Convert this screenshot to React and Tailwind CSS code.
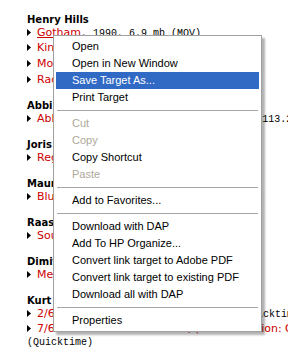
import React from 'react';

const sections = [
  {
    name: 'Henry Hills',
    items: [
      { link: 'Gotham', rest: ', 1990, 6.9 mb (MOV)', hover: true },
      { link: 'Kino Da!', rest: ', 1988, 3.2 mb (MOV)' },
      { link: 'Money', rest: ', 1985, 17.4 mb (MOV)' },
      { link: 'Radio Adios', rest: ', 1982, 5.1 mb (MOV)' },
    ],
  },
  {
    name: 'Abbi Sides',
    items: [{ link: 'Abbi: Notes on the Circle Dream', rest: ', 2002, 113.2 mb (MOV)' }],
  },
  {
    name: 'Joris Ivens',
    items: [{ link: 'Regen', rest: ', 1929, 21.8 mb (MOV)' }],
  },
  {
    name: 'Maurice Lemaître',
    items: [{ link: 'Blue Bar', rest: ', 1951, 9.4 mb (MOV)' }],
  },
  {
    name: 'Raas Pellen',
    items: [{ link: 'Sound Machine', rest: ', 1996, 8.0 mb (MOV)' }],
  },
  {
    name: 'Dimitri Kirsanoff',
    items: [{ link: 'Menilmontant', rest: ', 1926, 44.6 mb (MOV)' }],
  },
  {
    name: 'Kurt Kren',
    items: [
      { link: '2/60: 48 Köpfe aus dem Szondi-Test', rest: ' (Quicktime)' },
      { link: '7/64: Leda und der Schwan, (Materialaktion: Otto Muehl)', rest: '(Quicktime)', wrap: true },
      { link: '6/64: Mama und Papa (Materialaktion: Otto Muehl)', rest: ' (Quicktime)' },
    ],
  },
];

const menu = [
  { t: 'Open' },
  { t: 'Open in New Window' },
  { t: 'Save Target As...', hi: true },
  { t: 'Print Target' },
  'sep',
  { t: 'Cut', off: true },
  { t: 'Copy', off: true },
  { t: 'Copy Shortcut' },
  { t: 'Paste', off: true },
  'sep',
  { t: 'Add to Favorites...' },
  'sep',
  { t: 'Download with DAP' },
  { t: 'Add To HP Organize...' },
  { t: 'Convert link target to Adobe PDF' },
  { t: 'Convert link target to existing PDF' },
  { t: 'Download all with DAP' },
  'sep',
  { t: 'Properties' },
];

function Arrow() {
  return (
    <svg width="4" height="7" viewBox="0 0 4 7" className="inline-block mr-[6px] align-[0px]">
      <polygon points="0,0 4,3.5 0,7" fill="#000" />
    </svg>
  );
}

function Item({ item }) {
  const mono = "text-black text-[10px] leading-[12px] font-[family-name:'Liberation_Mono',monospace]";
  return (
    <div className="text-[11px] font-[family-name:'DejaVu_Sans',sans-serif]">
      <div className="whitespace-nowrap leading-[15.7px]">
        <Arrow />
        <span className={item.hover ? 'text-[#cc0000] underline' : 'text-[#cc0000]'}>{item.link}</span>
        {!item.wrap && <span className={mono}>{item.rest}</span>}
      </div>
      {item.wrap && (
        <div className="leading-[9px]">
          <span className={mono}>{item.rest}</span>
        </div>
      )}
    </div>
  );
}

export default function App() {
  return (
    <div className="relative w-[288px] h-[352px] overflow-hidden bg-white">
      <div className="pl-[27px] pt-[14px]">
        {sections.map((s, i) => (
          <div key={s.name} className={i === 0 ? '' : 'mt-[12.7px]'}>
            <h3 className="text-[10px] leading-[12px] font-bold text-black font-[family-name:'DejaVu_Sans',sans-serif]">
              {s.name}
            </h3>
            <div className="-mt-[1.4px]">
              {s.items.map((it) => (
                <Item key={it.link} item={it} />
              ))}
            </div>
          </div>
        ))}
      </div>

      {/* context menu */}
      <div className="absolute left-[53px] top-[35px] w-[209px] border border-[#a0a0a0] bg-white px-[2px] py-[2px] shadow-[3px_3px_2px_rgba(0,0,0,0.3)] font-[family-name:'Liberation_Sans',sans-serif] text-[11px]">
        {menu.map((m, i) =>
          m === 'sep' ? (
            <div key={i} className="h-[9px] py-[4px] px-[1px]">
              <div className="h-px bg-[#a6a6a6]" />
            </div>
          ) : (
            <div
              key={i}
              className={
                m.hi
                  ? 'h-[17px] leading-[17px] pl-[16px] bg-[#316ac5] text-white'
                  : m.off
                  ? 'h-[17px] leading-[17px] pl-[16px] text-[#aca899]'
                  : 'h-[17px] leading-[17px] pl-[16px] text-black'
              }
            >
              {m.t}
            </div>
          )
        )}
      </div>
    </div>
  );
}
